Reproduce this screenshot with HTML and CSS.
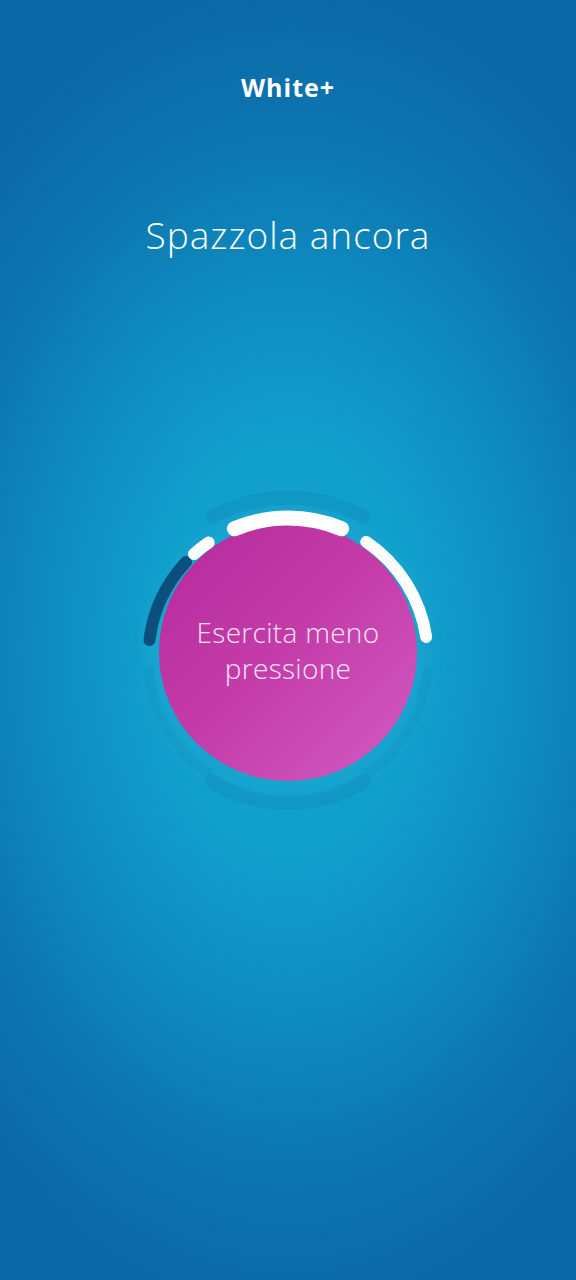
FILE: index.html
```html
<!DOCTYPE html>
<html lang="it">
<head>
    <meta charset="UTF-8">
    <meta name="viewport" content="width=device-width, initial-scale=1.0">
    <link rel="stylesheet" href="styles.css">
</head>
<body>
<div class="screen">
    <div class="brand">White+</div>
    <div class="title">Spazzola ancora</div>

    <div class="dial">
        <!-- progress ring drawn over the bubble -->
        <svg class="ring" viewBox="0 0 320 340" width="320" height="340">
            <!-- faint guide arcs -->
            <path class="guide" d="M 84.9 31.7 A 160 160 0 0 1 235.1 31.7" />
            <path class="guide" d="M 83.2 296 A 145 145 0 0 0 236.8 296" />
            <path class="guide thin" d="M 20.5 185.2 A 140 140 0 0 0 79.7 287.7" />
            <path class="guide thin" d="M 240.3 287.7 A 140 140 0 0 0 299.5 185.2" />
            <!-- segments -->
            <path class="seg done" d="M 58 77 A 140 140 0 0 0 21.5 155" />
            <path class="seg" d="M 80.7 57.6 A 140 140 0 0 0 66 69" />
            <path class="seg wide" d="M 106.4 43.7 A 140 140 0 0 1 213.6 43.7" />
            <path class="seg" d="M 238.3 56.9 A 140 140 0 0 1 298.2 152" />
        </svg>
        <div class="bubble">
            <span>Esercita meno<br>pressione</span>
        </div>
    </div>
</div>
</body>
</html>
```

FILE: styles.css
```css
html, body {
    margin: 0;
    padding: 0;
}

body {
    font-family: "Open Sans", Lato, sans-serif;
    color: #ffffff;
    background: #0b68a6;
}

.screen {
    height: 1280px;
    display: flex;
    flex-direction: column;
    align-items: center;
    overflow: hidden;
    background:
        radial-gradient(ellipse 440px 660px at 288px 650px,
            #12a4cf 0%, #11a0cc 30%, #0e8cc1 55%, #0c76b0 78%, #0b68a6 100%);
}

.brand {
    margin-top: 72px;
    font-size: 25px;
    font-weight: 700;
    line-height: 30px;
    letter-spacing: 1px;
}

.title {
    margin-top: 110px;
    font-size: 37px;
    font-weight: 300;
    line-height: 46px;
    letter-spacing: 1px;
}

.dial {
    position: relative;
    width: 320px;
    height: 340px;
    margin-top: 227px;
    display: flex;
    align-items: center;
    justify-content: center;
}

.bubble {
    width: 258px;
    height: 258px;
    border-radius: 50%;
    margin-top: -6px;
    display: flex;
    align-items: center;
    justify-content: center;
    background: linear-gradient(135deg, #b42a9c 0%, #c33aa8 45%, #d25cc2 100%);
    box-shadow: 0 0 30px 10px rgba(80, 200, 235, 0.15);
}

.bubble span {
    display: block;
    margin-top: -4px;
    font-size: 28px;
    font-weight: 300;
    line-height: 36px;
    letter-spacing: 0.3px;
    text-align: center;
    color: #f6e6f4;
}

.ring {
    position: absolute;
    top: 0;
    left: 0;
    z-index: 1;
}

.seg {
    fill: none;
    stroke: #ffffff;
    stroke-width: 12;
    stroke-linecap: round;
}

.seg.wide {
    stroke-width: 15;
}

.seg.done {
    stroke: #0b4f7c;
}

.guide {
    fill: none;
    stroke: rgba(10, 90, 130, 0.12);
    stroke-width: 14;
    stroke-linecap: round;
}

.guide.thin {
    stroke: rgba(10, 90, 130, 0.07);
    stroke-width: 10;
}
```
